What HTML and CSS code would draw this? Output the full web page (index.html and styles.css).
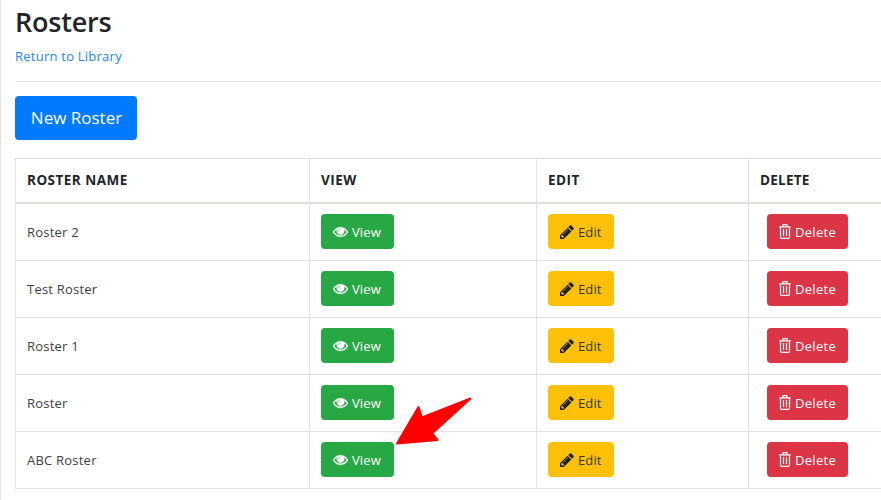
FILE: index.html
```html
<!DOCTYPE html>
<html lang="en">
<head>
<meta charset="utf-8">
<title>Rosters</title>
<link rel="stylesheet" href="styles.css">
</head>
<body>
<svg width="0" height="0" class="defs">
  <symbol id="eye" viewBox="0 0 1792 1792"><path stroke="currentColor" stroke-width="50" d="M1664 960q-152-236-381-353 61 104 61 225 0 185-131.500 316.500t-316.500 131.500-316.500-131.500-131.500-316.500q0-121 61-225-229 117-381 353 133 205 333.500 326.500t434.500 121.500 434.500-121.500 333.500-326.500zm-720-384q0-20-14-34t-34-14q-125 0-214.500 89.500t-89.500 214.500q0 20 14 34t34 14 34-14 14-34q0-86 61-147t147-61q20 0 34-14t14-34zm848 384q0 34-20 69-140 230-376.500 368.500t-499.500 138.500-499.500-139-376.500-368q-20-35-20-69t20-69q140-229 376.500-368t499.500-139 499.500 139 376.500 368q20 35 20 69z"/></symbol>
  <symbol id="pencil" viewBox="128 128 1536 1536"><path d="M491 1536l91-91-235-235-91 91v107h128v128h107zm523-928q0-22-22-22-10 0-17 7l-542 542q-7 7-7 17 0 22 22 22 10 0 17-7l542-542q7-7 7-17zm-54-192l416 416-832 832h-416v-416zm683 96q0 53-37 90l-166 166-416-416 166-165q36-38 90-38 53 0 91 38l235 234q37 39 37 91z"/></symbol>
  <symbol id="trash" viewBox="0 0 12 15"><path d="M.3 2.800h11.400M3.800 2.500V1.200q0-.6.600-.6h3.200q.6 0 .6.600v1.300M1.500 3v10q0 1.300 1.300 1.300h6.400q1.300 0 1.300-1.300V3M4.500 5v7M7.500 5v7" fill="none" stroke="currentColor" stroke-width="1.200"/></symbol>
</svg>
<main class="page">
  <h1>Rosters</h1>
  <a class="back" href="#"><span>Return to Library</span></a>
  <hr>
  <a class="btn new" href="#">New Roster</a>
  <div class="table">
    <div class="row head"><div>ROSTER NAME</div><div>VIEW</div><div>EDIT</div><div>DELETE</div></div>
    <div class="row"><div class="name">Roster 2</div><div><a class="btn view"><svg><use href="#eye"/></svg>View</a></div><div><a class="btn edit"><svg><use href="#pencil"/></svg>Edit</a></div><div><a class="btn delete"><svg><use href="#trash"/></svg>Delete</a></div></div>
    <div class="row"><div class="name">Test Roster</div><div><a class="btn view"><svg><use href="#eye"/></svg>View</a></div><div><a class="btn edit"><svg><use href="#pencil"/></svg>Edit</a></div><div><a class="btn delete"><svg><use href="#trash"/></svg>Delete</a></div></div>
    <div class="row"><div class="name">Roster 1</div><div><a class="btn view"><svg><use href="#eye"/></svg>View</a></div><div><a class="btn edit"><svg><use href="#pencil"/></svg>Edit</a></div><div><a class="btn delete"><svg><use href="#trash"/></svg>Delete</a></div></div>
    <div class="row"><div class="name">Roster</div><div><a class="btn view"><svg><use href="#eye"/></svg>View</a></div><div><a class="btn edit"><svg><use href="#pencil"/></svg>Edit</a></div><div><a class="btn delete"><svg><use href="#trash"/></svg>Delete</a></div></div>
    <div class="row"><div class="name">ABC Roster</div><div><a class="btn view"><svg><use href="#eye"/></svg>View</a></div><div><a class="btn edit"><svg><use href="#pencil"/></svg>Edit</a></div><div><a class="btn delete"><svg><use href="#trash"/></svg>Delete</a></div></div>
  </div>
</main>
<svg class="arrow" viewBox="0 0 80 52"><path d="M2 48.500 23.500 12 27 22.500 75.500 3.500 37 38.500 42.500 45Z"/></svg>
</body>
</html>
```

FILE: styles.css
```css
* { box-sizing: border-box; }
body {
  margin: 0;
  height: 500px;
  overflow: hidden;
  position: relative;
  background: #fff;
  color: #212529;
  font-family: "Open Sans", "Noto Sans", sans-serif;
  font-size: 13px;
}
.defs { position: absolute; }
.page { height: 500px; border-left: 1px solid #e2e2e2; padding: 4px 0 0 14px; }
h1 { margin: 0; height: 36px; line-height: 35px; font-size: 27px; font-weight: 550; letter-spacing: -.2px; }
a { text-decoration: none; }
.back { display: block; height: 41px; line-height: 32px; color: #2585ff; letter-spacing: .24px; }
hr { margin: 0 0 14px; border: 0; height: 1px; background: #e5e5e5; }
.btn { display: flex; align-items: center; border-radius: 4px; color: #fff; height: 35px; white-space: nowrap; }
.new { width: 122px; height: 44px; justify-content: center; padding: 0 0 2px 1px; font-size: 17px; background: #007bff; margin-bottom: 18px; }
.table { border: 1px solid #dee2e6; border-width: 1px 0 0 1px; }
.row { display: grid; grid-template-columns: 294px 227px 212px 1fr; height: 57px; border-bottom: 1px solid #dee2e6; }
.row > div { display: flex; align-items: center; padding-left: 11px; border-right: 1px solid #dee2e6; }
.row > div:last-child { padding-left: 18px; border-right: 0; }
.row.head { height: 45px; border-bottom-width: 2px; font-weight: 700; font-size: 13.5px; letter-spacing: .48px; }
.row.head > div { padding-bottom: 2px; }
.row.head > div:last-child { padding-left: 11px; letter-spacing: .25px; }
.row .name { color: #3c4044; letter-spacing: .22px; }
.row .btn { padding: 1px 0 0 12px; margin-top: -2px; letter-spacing: .1px; }
.btn svg { flex: none; fill: currentColor; }
.view { width: 73px; background: #28a745; }
.view svg { width: 15px; height: 15px; margin-right: 4px; }
.edit.btn { width: 66px; background: #ffc107; color: #33373a; }
.edit svg { width: 14px; height: 14px; margin-right: 4px; color: #212529; }
.delete { width: 81px; background: #dc3545; }
.row .delete { letter-spacing: .3px; }
.delete svg { width: 12px; height: 15px; margin-right: 4px; }
.arrow { position: absolute; left: 395px; top: 395px; width: 80px; height: 52px; fill: #f00; stroke: #f00; stroke-width: 2; stroke-linejoin: round; }
```
